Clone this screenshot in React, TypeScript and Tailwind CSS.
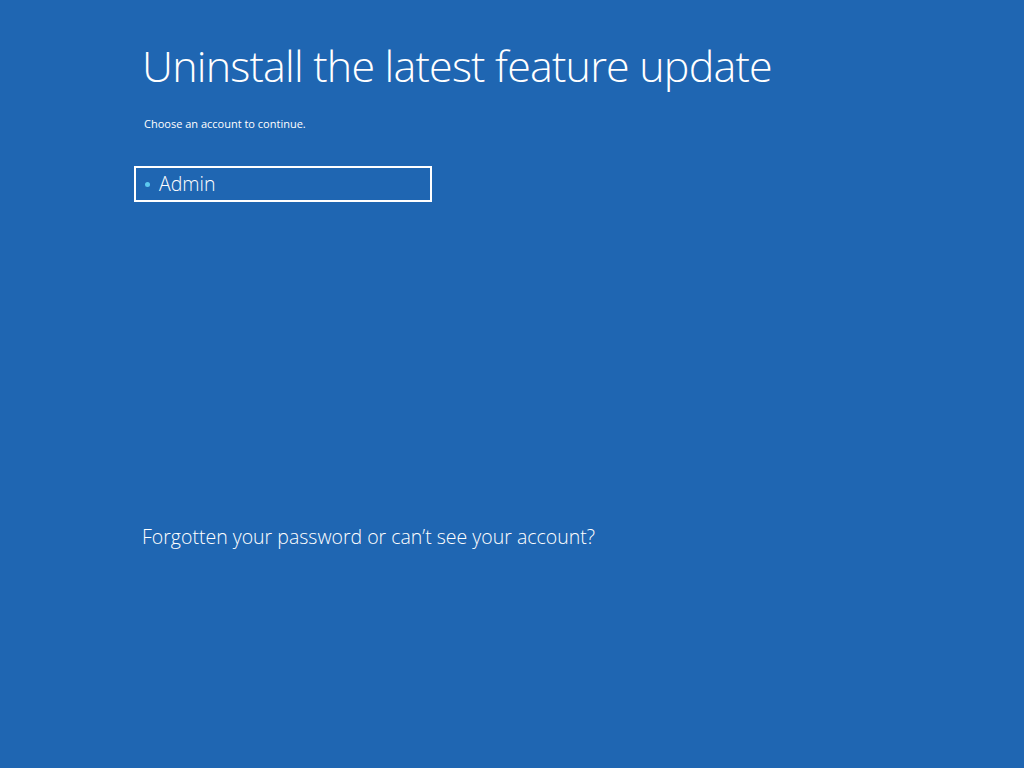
import React from 'react';

const App: React.FC = () => {
  return (
    <div className="min-h-screen w-full bg-[#1f66b2] text-white font-['Open_Sans','Noto_Sans',sans-serif] overflow-hidden">
      <div className="pl-[142px] pt-[36px] flex flex-col">
        <h1 className="text-[43px] font-light leading-[60px] tracking-[-0.8px]">Uninstall the latest feature update</h1>
        <p className="mt-[20px] ml-[2px] text-[11px] leading-[16px]">Choose an account to continue.</p>
        <div className="mt-[34px] -ml-[8px] w-[298px] h-[36px] border-2 border-white flex items-center pl-[9px]">
          <span className="w-[5px] h-[5px] rounded-full bg-[#5cc9f0]"></span>
          <span className="ml-[9px] text-[19.5px] font-light leading-none">Admin</span>
        </div>
        <button className="mt-[322px] text-left text-[19.5px] font-light leading-[26px] text-white">
          Forgotten your password or can’t see your account?
        </button>
      </div>
    </div>
  );
};

export default App;
